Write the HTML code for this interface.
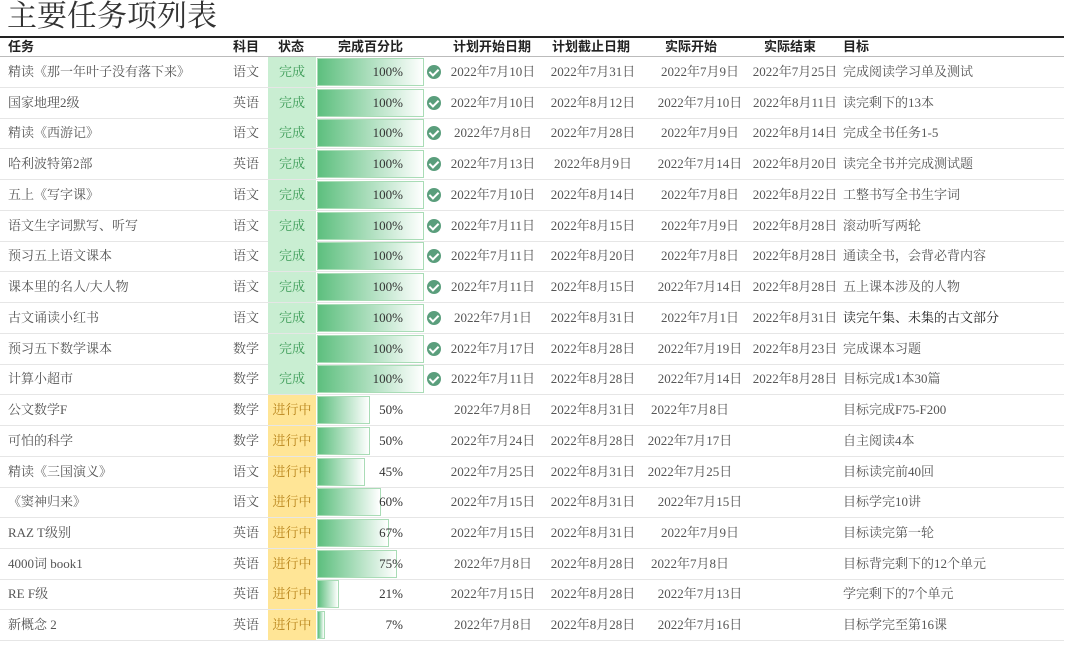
<!DOCTYPE html>
<html><head><meta charset="utf-8"><style>
body{margin:0;width:1080px;height:648px;background:#fff;position:relative;overflow:hidden;font-family:"Liberation Serif","Noto Serif CJK SC",serif;}
.title{position:absolute;left:7px;top:-1px;font-size:30px;color:#333;line-height:36px;font-family:"Liberation Serif","Noto Serif CJK SC",serif;}
.hl{position:absolute;left:0;top:36px;width:1064px;height:2px;background:#222;}
.hd{position:absolute;top:38px;height:18px;line-height:18px;font-size:13px;font-weight:bold;color:#222;font-family:"Liberation Sans","Noto Sans CJK SC",sans-serif;}
.hb{position:absolute;left:0;top:56px;width:1064px;height:1px;background:#bbb;}
.r{position:absolute;left:0;width:1064px;height:31px;border-bottom:1px solid #e6e6e6;box-sizing:border-box;font-size:13px;color:#555;line-height:30px;}
.r div{position:absolute;top:0;white-space:nowrap;}
.t{left:8px}.s{left:233px}
.st{left:268px;width:48px;height:30px;text-align:center}
.ok .st{background:#c9eed2;color:#3a9a55}
.ip .st{background:#ffe596;color:#b9851c}
.b{left:317px;top:1px!important;height:28px;background:linear-gradient(90deg,#5dbf7e,#ffffff);border:1px solid #a9dcb6;box-sizing:border-box}
.p{left:330px;width:73px;text-align:right;color:#333}
.ic{left:427px;top:8px!important;width:14px;height:14px;border-radius:50%;background:#5a9e7c}
.ic:after{content:"";position:absolute;left:4px;top:2px;width:4px;height:7px;border:solid #fff;border-width:0 2px 2px 0;transform:rotate(45deg)}
.d1,.d2,.d3,.d4{width:100px;text-align:center}
.d1{left:443px}.d2{left:543px}.d3{left:650px}.d4{left:745px}
.g{left:843px}
</style></head><body>
<div class="title">主要任务项列表</div>
<div class="hl"></div>
<div class="hd" style="left:8px">任务</div>
<div class="hd" style="left:233px">科目</div>
<div class="hd" style="left:278px">状态</div>
<div class="hd" style="left:338px">完成百分比</div>
<div class="hd" style="left:453px">计划开始日期</div>
<div class="hd" style="left:552px">计划截止日期</div>
<div class="hd" style="left:665px">实际开始</div>
<div class="hd" style="left:764px">实际结束</div>
<div class="hd" style="left:843px">目标</div>
<div class="hb"></div>

<div class="r ok" style="top:57px"><div class="t">精读《那一年叶子没有落下来》</div><div class="s">语文</div><div class="st">完成</div><div class="b" style="width:107px"></div><div class="p">100%</div><div class="ic"></div><div class="d1">2022年7月10日</div><div class="d2">2022年7月31日</div><div class="d3">2022年7月9日</div><div class="d4">2022年7月25日</div><div class="g">完成阅读学习单及测试</div></div>
<div class="r ok" style="top:88px"><div class="t">国家地理2级</div><div class="s">英语</div><div class="st">完成</div><div class="b" style="width:107px"></div><div class="p">100%</div><div class="ic"></div><div class="d1">2022年7月10日</div><div class="d2">2022年8月12日</div><div class="d3">2022年7月10日</div><div class="d4">2022年8月11日</div><div class="g">读完剩下的13本</div></div>
<div class="r ok" style="top:118px"><div class="t">精读《西游记》</div><div class="s">语文</div><div class="st">完成</div><div class="b" style="width:107px"></div><div class="p">100%</div><div class="ic"></div><div class="d1">2022年7月8日</div><div class="d2">2022年7月28日</div><div class="d3">2022年7月9日</div><div class="d4">2022年8月14日</div><div class="g">完成全书任务1-5</div></div>
<div class="r ok" style="top:149px"><div class="t">哈利波特第2部</div><div class="s">英语</div><div class="st">完成</div><div class="b" style="width:107px"></div><div class="p">100%</div><div class="ic"></div><div class="d1">2022年7月13日</div><div class="d2">2022年8月9日</div><div class="d3">2022年7月14日</div><div class="d4">2022年8月20日</div><div class="g">读完全书并完成测试题</div></div>
<div class="r ok" style="top:180px"><div class="t">五上《写字课》</div><div class="s">语文</div><div class="st">完成</div><div class="b" style="width:107px"></div><div class="p">100%</div><div class="ic"></div><div class="d1">2022年7月10日</div><div class="d2">2022年8月14日</div><div class="d3">2022年7月8日</div><div class="d4">2022年8月22日</div><div class="g">工整书写全书生字词</div></div>
<div class="r ok" style="top:211px"><div class="t">语文生字词默写、听写</div><div class="s">语文</div><div class="st">完成</div><div class="b" style="width:107px"></div><div class="p">100%</div><div class="ic"></div><div class="d1">2022年7月11日</div><div class="d2">2022年8月15日</div><div class="d3">2022年7月9日</div><div class="d4">2022年8月28日</div><div class="g">滚动听写两轮</div></div>
<div class="r ok" style="top:241px"><div class="t">预习五上语文课本</div><div class="s">语文</div><div class="st">完成</div><div class="b" style="width:107px"></div><div class="p">100%</div><div class="ic"></div><div class="d1">2022年7月11日</div><div class="d2">2022年8月20日</div><div class="d3">2022年7月8日</div><div class="d4">2022年8月28日</div><div class="g">通读全书，会背必背内容</div></div>
<div class="r ok" style="top:272px"><div class="t">课本里的名人/大人物</div><div class="s">语文</div><div class="st">完成</div><div class="b" style="width:107px"></div><div class="p">100%</div><div class="ic"></div><div class="d1">2022年7月11日</div><div class="d2">2022年8月15日</div><div class="d3">2022年7月14日</div><div class="d4">2022年8月28日</div><div class="g">五上课本涉及的人物</div></div>
<div class="r ok" style="top:303px"><div class="t">古文诵读小红书</div><div class="s">语文</div><div class="st">完成</div><div class="b" style="width:107px"></div><div class="p">100%</div><div class="ic"></div><div class="d1">2022年7月1日</div><div class="d2">2022年8月31日</div><div class="d3">2022年7月1日</div><div class="d4">2022年8月31日</div><div class="g" style="color:#222">读完午集、未集的古文部分</div></div>
<div class="r ok" style="top:334px"><div class="t">预习五下数学课本</div><div class="s">数学</div><div class="st">完成</div><div class="b" style="width:107px"></div><div class="p">100%</div><div class="ic"></div><div class="d1">2022年7月17日</div><div class="d2">2022年8月28日</div><div class="d3">2022年7月19日</div><div class="d4">2022年8月23日</div><div class="g">完成课本习题</div></div>
<div class="r ok" style="top:364px"><div class="t">计算小超市</div><div class="s">数学</div><div class="st">完成</div><div class="b" style="width:107px"></div><div class="p">100%</div><div class="ic"></div><div class="d1">2022年7月11日</div><div class="d2">2022年8月28日</div><div class="d3">2022年7月14日</div><div class="d4">2022年8月28日</div><div class="g">目标完成1本30篇</div></div>
<div class="r ip" style="top:395px"><div class="t">公文数学F</div><div class="s">数学</div><div class="st">进行中</div><div class="b" style="width:53px"></div><div class="p">50%</div><div class="d1">2022年7月8日</div><div class="d2">2022年8月31日</div><div class="d3" style="left:640px">2022年7月8日</div><div class="g">目标完成F75-F200</div></div>
<div class="r ip" style="top:426px"><div class="t">可怕的科学</div><div class="s">数学</div><div class="st">进行中</div><div class="b" style="width:53px"></div><div class="p">50%</div><div class="d1">2022年7月24日</div><div class="d2">2022年8月28日</div><div class="d3" style="left:640px">2022年7月17日</div><div class="g">自主阅读4本</div></div>
<div class="r ip" style="top:457px"><div class="t">精读《三国演义》</div><div class="s">语文</div><div class="st">进行中</div><div class="b" style="width:48px"></div><div class="p">45%</div><div class="d1">2022年7月25日</div><div class="d2">2022年8月31日</div><div class="d3" style="left:640px">2022年7月25日</div><div class="g">目标读完前40回</div></div>
<div class="r ip" style="top:487px"><div class="t">《窦神归来》</div><div class="s">语文</div><div class="st">进行中</div><div class="b" style="width:64px"></div><div class="p">60%</div><div class="d1">2022年7月15日</div><div class="d2">2022年8月31日</div><div class="d3">2022年7月15日</div><div class="g">目标学完10讲</div></div>
<div class="r ip" style="top:518px"><div class="t">RAZ T级别</div><div class="s">英语</div><div class="st">进行中</div><div class="b" style="width:72px"></div><div class="p">67%</div><div class="d1">2022年7月15日</div><div class="d2">2022年8月31日</div><div class="d3">2022年7月9日</div><div class="g">目标读完第一轮</div></div>
<div class="r ip" style="top:549px"><div class="t">4000词 book1</div><div class="s">英语</div><div class="st">进行中</div><div class="b" style="width:80px"></div><div class="p">75%</div><div class="d1">2022年7月8日</div><div class="d2">2022年8月28日</div><div class="d3" style="left:640px">2022年7月8日</div><div class="g">目标背完剩下的12个单元</div></div>
<div class="r ip" style="top:579px"><div class="t">RE F级</div><div class="s">英语</div><div class="st">进行中</div><div class="b" style="width:22px"></div><div class="p">21%</div><div class="d1">2022年7月15日</div><div class="d2">2022年8月28日</div><div class="d3">2022年7月13日</div><div class="g">学完剩下的7个单元</div></div>
<div class="r ip" style="top:610px"><div class="t">新概念 2</div><div class="s">英语</div><div class="st">进行中</div><div class="b" style="width:8px"></div><div class="p">7%</div><div class="d1">2022年7月8日</div><div class="d2">2022年8月28日</div><div class="d3">2022年7月16日</div><div class="g">目标学完至第16课</div></div>
</body></html>
